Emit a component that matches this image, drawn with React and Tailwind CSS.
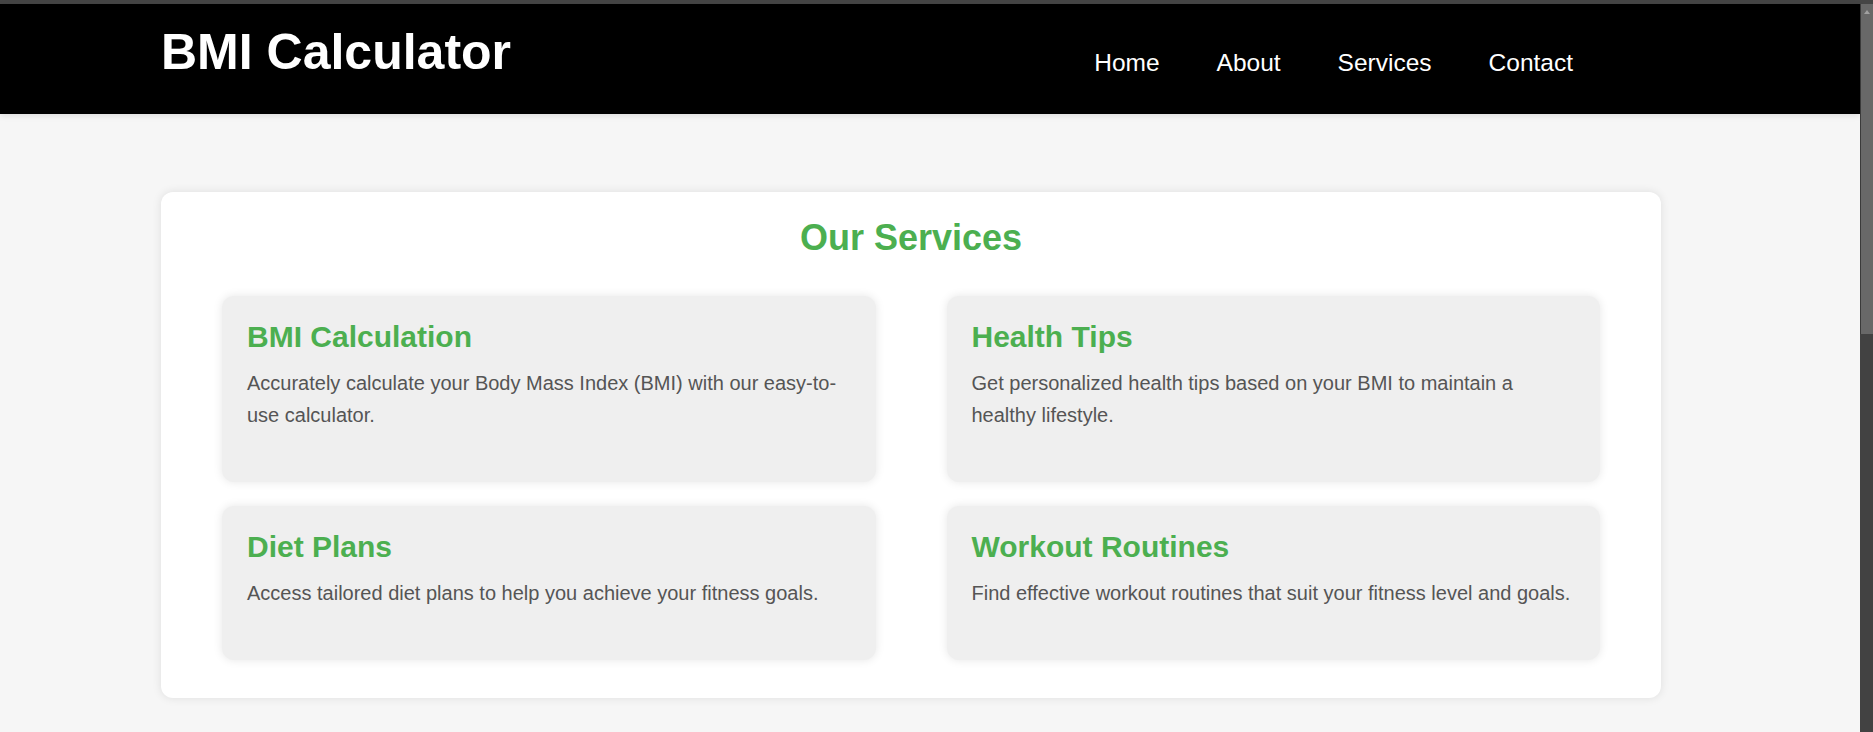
import React from 'react';

const services = [
  { title: 'BMI Calculation', text: 'Accurately calculate your Body Mass Index (BMI) with our easy-to-use calculator.' },
  { title: 'Health Tips', text: 'Get personalized health tips based on your BMI to maintain a healthy lifestyle.' },
  { title: 'Diet Plans', text: 'Access tailored diet plans to help you achieve your fitness goals.' },
  { title: 'Workout Routines', text: 'Find effective workout routines that suit your fitness level and goals.' },
];

const navLinks = ['Home', 'About', 'Services', 'Contact'];

const App = () => {
  return (
    <div className="h-[732px] overflow-hidden flex flex-col bg-[#f6f6f6] font-['Liberation_Sans',Arial,sans-serif]">
      {/* window top edge */}
      <div className="h-[4px] bg-[#454545] shrink-0" />

      <div className="flex flex-1 min-h-0">
        <main className="flex-1 min-w-0">
          {/* Header */}
          <header className="bg-black h-[110px] shadow-[0_2px_6px_rgba(0,0,0,0.1)]">
            <div className="ml-[161px] w-[1500px] flex justify-between items-start">
              <h1 className="mt-[20px] text-[50px] leading-[57px] font-bold text-white">BMI Calculator</h1>
              <nav className="mt-[45px] mr-[88px] flex gap-[57px]">
                {navLinks.map(link => (
                  <a key={link} href="#" className="text-[24.5px] leading-[28px] text-white">
                    {link}
                  </a>
                ))}
              </nav>
            </div>
          </header>

          {/* Services */}
          <section className="pt-[78px]">
            <div className="ml-[161px] w-[1500px] bg-white rounded-[12px] shadow-[0_0_10px_rgba(0,0,0,0.1)] px-[61px] pt-[25px] pb-[38px]">
              <h2 className="text-center text-[36px] leading-[41px] font-bold text-[#4caf50]">Our Services</h2>
              <div className="mt-[38px] grid grid-cols-2 gap-x-[71px] gap-y-[24px]">
                {services.map(service => (
                  <div
                    key={service.title}
                    className="bg-[#efefef] rounded-[12px] shadow-[0_0_10px_rgba(0,0,0,0.1)] px-[25px] pt-[24px] pb-[51px]"
                  >
                    <h3 className="text-[30px] leading-[34px] font-bold text-[#4caf50]">{service.title}</h3>
                    <p className="mt-[13px] text-[20px] leading-[32px] text-[#555]">{service.text}</p>
                  </div>
                ))}
              </div>
            </div>
          </section>
        </main>

        {/* scrollbar */}
        <aside className="w-[13px] shrink-0 bg-[#424242] flex flex-col">
          <div className="h-[330px] bg-[#686868] border-l border-[#3a3a3a] flex justify-center pt-[6px]">
            <div className="w-0 h-0 border-l-[3px] border-r-[3px] border-b-[4px] border-l-transparent border-r-transparent border-b-[#a0a0a0]" />
          </div>
        </aside>
      </div>
    </div>
  );
};

export default App;
